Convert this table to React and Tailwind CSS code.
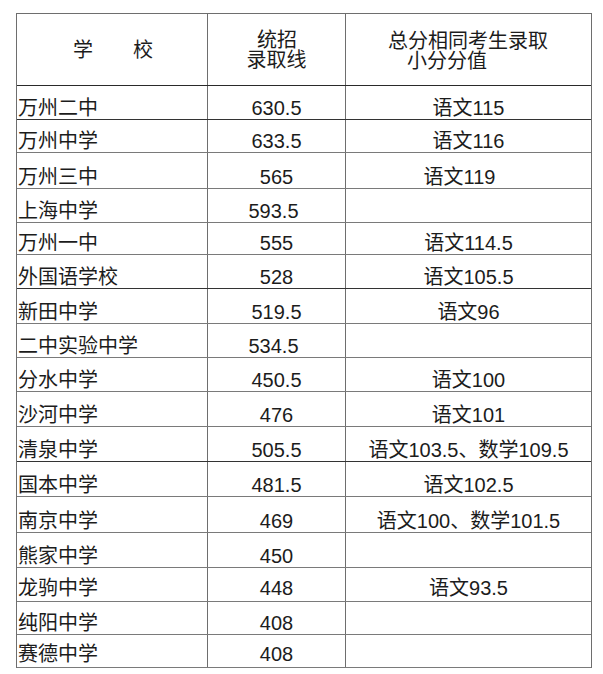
import React from "react";

const rows = [
  { school: "万州二中", line: "630.5", score: "语文115", h: "h-[34px]" },
  { school: "万州中学", line: "633.5", score: "语文116", h: "h-[33px]" },
  { school: "万州三中", line: "565", score: "语文119", h: "h-[36px]", scoreShift: "pr-[18px]" },
  { school: "上海中学", line: "593.5", score: "", h: "h-[34px]", lineShift: "pr-[6px]" },
  { school: "万州一中", line: "555", score: "语文114.5", h: "h-[32px]" },
  { school: "外国语学校", line: "528", score: "语文105.5", h: "h-[34px]" },
  { school: "新田中学", line: "519.5", score: "语文96", h: "h-[35px]" },
  { school: "二中实验中学", line: "534.5", score: "", h: "h-[34px]", lineShift: "pr-[6px]" },
  { school: "分水中学", line: "450.5", score: "语文100", h: "h-[34px]" },
  { school: "沙河中学", line: "476", score: "语文101", h: "h-[35px]" },
  { school: "清泉中学", line: "505.5", score: "语文103.5、数学109.5", h: "h-[35px]" },
  { school: "国本中学", line: "481.5", score: "语文102.5", h: "h-[35px]" },
  { school: "南京中学", line: "469", score: "语文100、数学101.5", h: "h-[36px]" },
  { school: "熊家中学", line: "450", score: "", h: "h-[35px]" },
  { school: "龙驹中学", line: "448", score: "语文93.5", h: "h-[34px]", pad: "pb-[3px]" },
  { school: "纯阳中学", line: "408", score: "", h: "h-[33px]" },
  { school: "赛德中学", line: "408", score: "", h: "h-[33px]", pad: "pb-[3px]" },
];

export default function App() {
  return (
    <div
      className="min-h-screen bg-white pt-[13px] pl-[16px] text-[20px] leading-[20px] text-[#1c1c1c]"
      style={{ fontFamily: '"Liberation Sans", "Noto Sans CJK SC", sans-serif' }}
    >
      <div className="w-[576px] border-t border-l border-r border-[#6e6e6e]">
        {/* header */}
        <div className="flex h-[72px] border-b border-[#2a2a2a]">
          <div className="w-[191px] border-r border-[#6e6e6e] flex items-center justify-center gap-[40px] pl-[2px] pt-[1px]">
            <span>学</span>
            <span>校</span>
          </div>
          <div className="w-[138px] border-r border-[#6e6e6e] flex flex-col items-center justify-center pt-[1px]">
            <span className="pl-[1px]">统招</span>
            <span>录取线</span>
          </div>
          <div className="w-[245px] flex flex-col items-start justify-center pl-[42px] pt-[2px]">
            <span>总分相同考生录取</span>
            <span className="ml-[19px]">小分分值</span>
          </div>
        </div>

        {rows.map((r, i) => (
          <div
            key={i}
            className={`flex ${r.h} border-b ${i === 0 || i === 5 || i === 10 ? "border-[#333]" : "border-[#7a7a7a]"}`}
          >
            <div className={`w-[191px] border-r border-[#6e6e6e] flex items-end pl-[1px] ${r.pad || "pb-[1px]"}`}>
              {r.school}
            </div>
            <div className={`w-[138px] border-r border-[#6e6e6e] flex items-end justify-center ${r.lineShift || ""} ${r.pad || "pb-[1px]"}`}>
              {r.line}
            </div>
            <div className={`w-[245px] flex items-end justify-center ${r.scoreShift || ""} ${r.pad || "pb-[1px]"}`}>
              {r.score}
            </div>
          </div>
        ))}
      </div>
    </div>
  );
}
